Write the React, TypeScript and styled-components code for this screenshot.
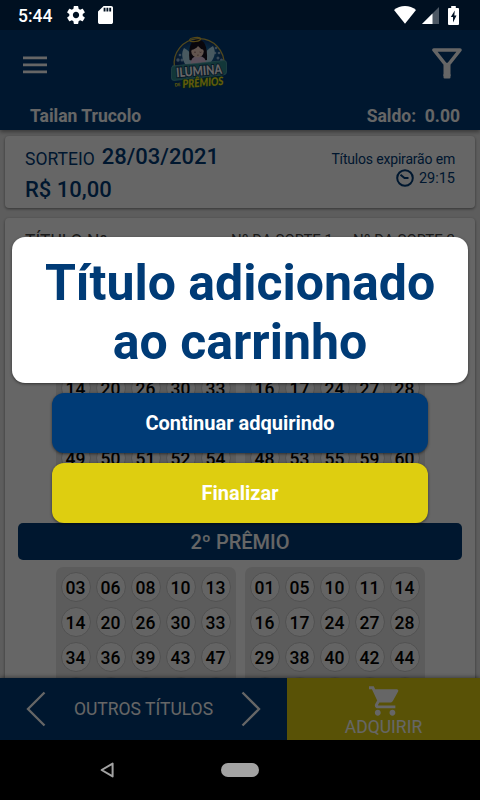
import React from 'react'
import styled, { createGlobalStyle } from 'styled-components'

const GlobalStyle = createGlobalStyle`
  * {
    box-sizing: border-box;
  }
  body {
    margin: 0;
    font-family: Roboto, sans-serif;
  }
`

const LEFT = [
  ['03', '06', '08', '10', '13'],
  ['14', '20', '26', '30', '33'],
  ['34', '36', '39', '43', '47'],
  ['49', '50', '51', '52', '54'],
]

const RIGHT = [
  ['01', '05', '10', '11', '14'],
  ['16', '17', '24', '27', '28'],
  ['29', '38', '40', '42', '44'],
  ['48', '53', '55', '59', '60'],
]

const Logo: React.FC = () => (
  <svg width="60" height="60" viewBox="0 0 60 60">
    <defs>
      <radialGradient id="sky" cx="50%" cy="55%" r="55%">
        <stop offset="0" stopColor="#6fc4e8" />
        <stop offset="0.5" stopColor="#17629c" />
        <stop offset="1" stopColor="#0a2f6a" />
      </radialGradient>
    </defs>
    <path d="M4.500 35 A25 25 0 1 1 54 33 Z" fill="url(#sky)" stroke="#c8b24a" strokeWidth="1.300" />
    <g fill="#8fb4d8">
      <circle cx="10" cy="22" r="1.300" />
      <circle cx="8" cy="27" r="1.700" />
      <circle cx="12" cy="27" r="1.500" />
      <circle cx="46" cy="15" r="1.300" />
      <circle cx="45" cy="20" r="1.300" />
      <circle cx="49" cy="20" r="1.300" />
      <circle cx="48" cy="25" r="1.500" />
      <circle cx="51.500" cy="27" r="1.500" />
    </g>
    <path d="M14 15 C18 17 21 20 24 25 L22 31 L15 31 C12 26 11 20 14 15 Z" fill="#b5def0" />
    <path d="M43 13 C38 16 35 19 33 24 L35 30 L41 29 C45 24 46 18 43 13 Z" fill="#b5def0" />
    <path d="M19.500 27 C18 14 21 6.500 27.500 6.500 C35 6.500 37.500 14 37 27 Q28 30 19.500 27 Z" fill="#17121f" />
    <path d="M20.500 32 Q20.500 23 28 23 Q36.500 23 36.500 32 Z" fill="#e0c8e4" />
    <ellipse cx="27.500" cy="18.500" rx="6.200" ry="6" fill="#f5d5c5" />
    <path d="M21 17 Q23 9 28 10.500 Q33 10 34.500 17 Q30 16 28 13 Q26 16 21 17 Z" fill="#17121f" />
    <path d="M24 19 q1 .8 2 0 M29.500 19 q1 .8 2 0 M27 22 q.9 .6 1.800 0" stroke="#6b3f3f" strokeWidth=".6" fill="none" />
    <ellipse cx="25" cy="6.500" rx="5.500" ry="2" fill="none" stroke="#d8b53a" strokeWidth="1.200" transform="rotate(-8 25 6)" />
    <path d="M2.500 33 L54 27.500 Q56.500 27.500 56.500 30 L56.500 39 Q56.500 41.500 54 41.800 L4 47.500 Q1.500 47.500 1.500 45 L1.500 35.500 Q1.500 33.300 3.500 33 Z" fill="#2f8b90" stroke="#5faeb0" strokeWidth=".7" />
    <path d="M12 47.500 L52 43 L53 52 L13 55 Z" fill="#0f5148" />
    <g fontFamily="Lato, sans-serif" fontWeight="900" transform="rotate(-4.500 29 38)">
      <text x="6" y="42.500" fontSize="13" textLength="46" lengthAdjust="spacingAndGlyphs" fill="#fff" stroke="#173a5e" strokeWidth="2" paintOrder="stroke">ILUMINA</text>
      <text x="3.500" y="51.500" fontSize="4.500" fill="#e6dc1c">DE</text>
      <text x="11.500" y="53.800" fontSize="11.500" fontStyle="italic" textLength="41" lengthAdjust="spacingAndGlyphs" fill="#f2e716" stroke="#0f5148" strokeWidth="1.200" paintOrder="stroke">PRÊMIOS</text>
    </g>
  </svg>
)

const Balls: React.FC<{ rows: string[][] }> = ({ rows }) => (
  <BallGroup>
    {rows.map((row) => row.map((n) => <Ball key={n}>{n}</Ball>))}
  </BallGroup>
)

const Prize: React.FC<{ name: string }> = ({ name }) => (
  <PrizeBlock>
    <PrizeTitle>{name}</PrizeTitle>
    <BallColumns>
      <Balls rows={LEFT} />
      <Balls rows={RIGHT} />
    </BallColumns>
  </PrizeBlock>
)

const StatusIcons: React.FC = () => (
  <StatusBar>
    <Clock>5:44</Clock>
    <svg width="18" height="18" viewBox="2 2 20 20" fill="#fff">
      <path d="M19.430 12.980c.04-.32.07-.64.07-.98s-.03-.66-.07-.98l2.110-1.650c.19-.15.24-.42.12-.64l-2-3.460c-.12-.22-.39-.3-.61-.22l-2.490 1c-.52-.4-1.080-.73-1.690-.98l-.38-2.650A.488.488 0 0 0 14 2h-4c-.25 0-.46.18-.49.42l-.38 2.650c-.61.25-1.170.59-1.690.98l-2.490-1c-.23-.09-.49 0-.61.22l-2 3.460c-.13.22-.07.49.12.64l2.110 1.650c-.04.32-.07.65-.07.98s.03.66.07.98l-2.110 1.650c-.19.15-.24.42-.12.64l2 3.460c.12.22.39.3.61.22l2.490-1c.52.4 1.080.73 1.690.98l.38 2.650c.03.24.24.42.49.42h4c.25 0 .46-.18.49-.42l.38-2.650c.61-.25 1.170-.59 1.690-.98l2.490 1c.23.09.49 0 .61-.22l2-3.460c.12-.22.07-.49-.12-.64l-2.110-1.650zM12 15.500c-1.930 0-3.500-1.570-3.500-3.500s1.570-3.500 3.500-3.500 3.500 1.570 3.500 3.500-1.570 3.500-3.500 3.500z" />
    </svg>
    <svg width="15" height="18" viewBox="4 2 16 20" preserveAspectRatio="none" fill="#fff">
      <path d="M18 2h-8L4.020 8 4 20c0 1.100.9 2 2 2h12c1.100 0 2-.9 2-2V4c0-1.100-.9-2-2-2zm-6 6h-2V4h2v4zm3 0h-2V4h2v4zm3 0h-2V4h2v4z" />
    </svg>
    <Spacer />
    <svg width="22" height="18" viewBox="0 0 22 18" fill="#fff">
      <path d="M11 17.700 L0 4.100 C3 1.500 7 0 11 0 C15 0 19 1.500 22 4.100 Z" />
    </svg>
    <svg width="17" height="17" viewBox="0 0 17 17" fill="#fff">
      <path d="M17 0 V17 H0 Z" opacity=".3" />
      <path d="M10.500 6.500 V17 H0 Z" />
    </svg>
    <svg width="11" height="19" viewBox="0 0 11 19">
      <path d="M3.200 0 h4.600 v2 H10 a1 1 0 0 1 1 1 V18 a1 1 0 0 1 -1 1 H1 a1 1 0 0 1 -1 -1 V3 a1 1 0 0 1 1 -1 H3.200 Z" fill="#fff" />
      <path d="M6.800 4.500 L2.800 11 H5 V16.500 L8.500 9.500 H6.300 Z" fill="#001123" />
    </svg>
  </StatusBar>
)

const App: React.FC = () => {
  return (
    <Screen>
      <GlobalStyle />
      <Header>
        <Toolbar>
          <svg width="24" height="18" viewBox="0 0 24 18" fill="#fff">
            <path d="M0 0.500h24v2.700H0zM0 7.500h24v2.700H0zM0 14.500h24v2.700H0z" />
          </svg>
          <Logo />
          <svg width="30" height="31" viewBox="0 0 30 31" fill="none" stroke="#fff" strokeLinejoin="round" strokeLinecap="round">
            <path d="M2 2 H28 L16.500 16.500 H13.500 Z" strokeWidth="3.600" />
            <path d="M15 17 V28" strokeWidth="7" strokeLinecap="butt" />
            <path d="M12.700 27 V29.300 H17.300 V27" strokeWidth="2.400" />
          </svg>
        </Toolbar>
        <UserRow>
          <span>Tailan Trucolo</span>
          <span>Saldo:&nbsp; 0.00</span>
        </UserRow>
      </Header>
      <Content>
        <DrawCard>
          <div>
            <DrawLine>
              <span>SORTEIO</span>
              <strong>28/03/2021</strong>
            </DrawLine>
            <Price>R$ 10,00</Price>
          </div>
          <Expiry>
            Títulos expirarão em
            <Timer>
              <svg width="18" height="18" viewBox="0 0 18 18" fill="none" stroke="#003b76" strokeWidth="2">
                <circle cx="9" cy="9" r="7.800" />
                <path d="M4.500 5.800 L8.500 9 H12.500" />
              </svg>
              29:15
            </Timer>
          </Expiry>
        </DrawCard>
        <TitleCard>
          <TitleHead>
            <TitleNumber>TÍTULO Nº</TitleNumber>
            <span>Nº DA SORTE 1</span>
            <span>Nº DA SORTE 2</span>
          </TitleHead>
          <Prize name="1º PRÊMIO" />
          <Prize name="2º PRÊMIO" />
        </TitleCard>
      </Content>
      <BottomBar>
        <OtherTitles>
          <svg width="20" height="36" viewBox="0 0 20 36" fill="none" stroke="#fff" strokeWidth="2.300">
            <path d="M18.500 1.500 L2 18 L18.500 34.500" />
          </svg>
          <span>OUTROS TÍTULOS</span>
          <svg width="20" height="36" viewBox="0 0 20 36" fill="none" stroke="#fff" strokeWidth="2.300">
            <path d="M1.500 1.500 L18 18 L1.500 34.500" />
          </svg>
        </OtherTitles>
        <Acquire>
          <svg width="30" height="30" viewBox="1 2 20.500 20" fill="#fff">
            <path d="M7 18c-1.100 0-1.990.9-1.990 2S5.900 22 7 22s2-.9 2-2-.9-2-2-2zM1 2v2h2l3.600 7.590-1.350 2.450c-.16.28-.25.61-.25.96 0 1.100.9 2 2 2h12v-2H7.420c-.14 0-.25-.11-.25-.25l.03-.12.9-1.630h7.450c.75 0 1.410-.41 1.750-1.030l3.580-6.490A1.003 1.003 0 0 0 20 4H5.210l-.94-2H1zm16 16c-1.100 0-1.990.9-1.990 2s.89 2 1.990 2 2-.9 2-2-.9-2-2-2z" />
          </svg>
          ADQUIRIR
        </Acquire>
      </BottomBar>
      <NavBar>
        <svg width="14" height="16" viewBox="0 0 14 16" fill="none" stroke="#a3a3a3" strokeWidth="2" strokeLinejoin="round">
          <path d="M12.600 1.600 V14.400 L1.600 8 Z" />
        </svg>
        <HomePill />
      </NavBar>

      <Overlay>
        <StatusIcons />
        <Message>
          Título adicionado
          <br />
          ao carrinho
        </Message>
        <DialogButton $color="#003b76">Continuar adquirindo</DialogButton>
        <DialogButton $color="#dece10">Finalizar</DialogButton>
      </Overlay>
    </Screen>
  )
}

const Screen = styled.div`
  position: relative;
  display: flex;
  flex-direction: column;
  width: 480px;
  height: 800px;
  overflow: hidden;
  background: #e9e9e9;
`

const Header = styled.header`
  flex: none;
  height: 130px;
  padding-top: 30px;
  background: #003b76;
  color: #fff;
  box-shadow: 0 2px 4px rgba(0, 0, 0, 0.4);
  z-index: 1;
`

const Toolbar = styled.div`
  display: flex;
  align-items: center;
  justify-content: space-between;
  height: 68px;
  padding: 0 18px 2px 23px;

  > svg:first-child {
    margin-top: 3px;
  }
  > svg:nth-child(2) {
    margin-left: 8px;
    margin-right: 87px;
  }
`

const UserRow = styled.div`
  display: flex;
  justify-content: space-between;
  padding: 7px 20px 0 30px;
  font-size: 17.500px;
  font-weight: 700;
  line-height: 22px;
`

const Content = styled.main`
  flex: 1;
  min-height: 0;
  overflow: hidden;
  padding: 6px 5px 0;
`

const Card = styled.section`
  background: #fff;
  border-radius: 4px;
  box-shadow: 0 1px 3px rgba(0, 0, 0, 0.45);
`

const DrawCard = styled(Card)`
  display: flex;
  justify-content: space-between;
  height: 72px;
  padding: 5px 20px 0;
  color: #003b76;
`

const DrawLine = styled.div`
  display: flex;
  gap: 7px;
  height: 32px;
  font-size: 17.500px;
  line-height: 36px;

  strong {
    font-size: 22px;
    font-weight: 500;
    line-height: 31px;
  }
`

const Price = styled.div`
  font-size: 22px;
  font-weight: 500;
  line-height: 33px;
`

const Expiry = styled.div`
  padding-top: 8px;
  font-size: 14px;
  letter-spacing: -0.18px;
  line-height: 20px;
  text-align: right;
`

const Timer = styled.div`
  display: flex;
  align-items: center;
  justify-content: flex-end;
  gap: 5px;
  font-size: 14.500px;
  letter-spacing: 0;

  svg {
    margin-top: -2px;
  }
`

const TitleCard = styled(Card)`
  height: 500px;
  margin-top: 10px;
  padding: 12px 13px 0;
`

const TitleHead = styled.div`
  display: flex;
  justify-content: flex-end;
  gap: 20px;
  height: 59px;
  padding: 0 7px;
  font-size: 15px;
  line-height: 20px;
  color: #444;
`

const TitleNumber = styled.span`
  flex: 1;
  font-size: 17.500px;
  line-height: 22px;
`

const PrizeBlock = styled.div`
  height: 234px;
`

const PrizeTitle = styled.div`
  height: 37px;
  border-radius: 5px;
  background: #003b76;
  color: #fff;
  font-size: 20px;
  font-weight: 500;
  line-height: 39px;
  text-align: center;
`

const BallColumns = styled.div`
  display: flex;
  justify-content: center;
  gap: 9px;
  margin-top: 7px;
`

const BallGroup = styled.div`
  display: grid;
  grid-template-columns: repeat(5, 30px);
  gap: 5px;
  padding: 5px;
  border-radius: 7px;
  background: #e6e6e6;
`

const Ball = styled.div`
  height: 30px;
  border: 1px solid #cacaca;
  border-radius: 50%;
  background: #fafafa;
  color: #000;
  font-size: 17.500px;
  font-weight: 500;
  line-height: 30px;
  text-align: center;
`

const BottomBar = styled.footer`
  display: flex;
  flex: none;
  height: 62px;
  color: #fff;
  font-size: 17.500px;
  box-shadow: 0 -1px 4px rgba(0, 0, 0, 0.4);
  z-index: 1;
`

const OtherTitles = styled.div`
  display: flex;
  align-items: center;
  justify-content: space-between;
  width: 287px;
  padding: 0 26px;
  background: #003b76;
`

const Acquire = styled.div`
  display: flex;
  flex: 1;
  flex-direction: column;
  align-items: center;
  padding-top: 8px;
  background: #dece10;
  line-height: 22px;
`

const NavBar = styled.nav`
  display: flex;
  align-items: center;
  flex: none;
  gap: 107px;
  height: 60px;
  padding-left: 100px;
  background: #000;
`

const HomePill = styled.div`
  width: 38px;
  height: 14px;
  border-radius: 7px;
  background: #a3a3a3;
`

const Overlay = styled.div`
  position: absolute;
  top: 0;
  left: 0;
  right: 0;
  bottom: 60px;
  z-index: 2;
  display: flex;
  flex-direction: column;
  align-items: center;
  background: rgba(0, 0, 0, 0.6);
`

const StatusBar = styled.div`
  display: flex;
  align-items: center;
  align-self: stretch;
  height: 30px;
  padding: 0 21px 0 18px;
  background: rgba(0, 0, 0, 0.28);
`

const Clock = styled.span`
  margin: 2px 15px 0 0;
  color: #fff;
  font-size: 17.500px;
  font-weight: 500;

  & + svg {
    margin-right: 13px;
  }
`

const Spacer = styled.div`
  flex: 1;

  & + svg {
    margin-right: 6px;
  }
  & + svg + svg {
    margin-right: 9px;
  }
`

const Message = styled.div`
  width: 456px;
  height: 145.500px;
  margin: 207px 0 10px;
  padding-top: 17px;
  border-radius: 13px;
  background: #fff;
  box-shadow: 0 1px 3px rgba(0, 0, 0, 0.5);
  color: #003b76;
  font-size: 50px;
  font-weight: 700;
  line-height: 58.500px;
  text-align: center;
`

const DialogButton = styled.button<{ $color: string }>`
  width: 376px;
  height: 60px;
  margin-bottom: 10px;
  padding: 1px 0 0;
  border: 0;
  border-radius: 12px;
  background: ${(props) => props.$color};
  box-shadow: 0 1px 3px rgba(0, 0, 0, 0.5);
  color: #fff;
  font-family: inherit;
  font-size: 20px;
  font-weight: 700;
`

export default App
